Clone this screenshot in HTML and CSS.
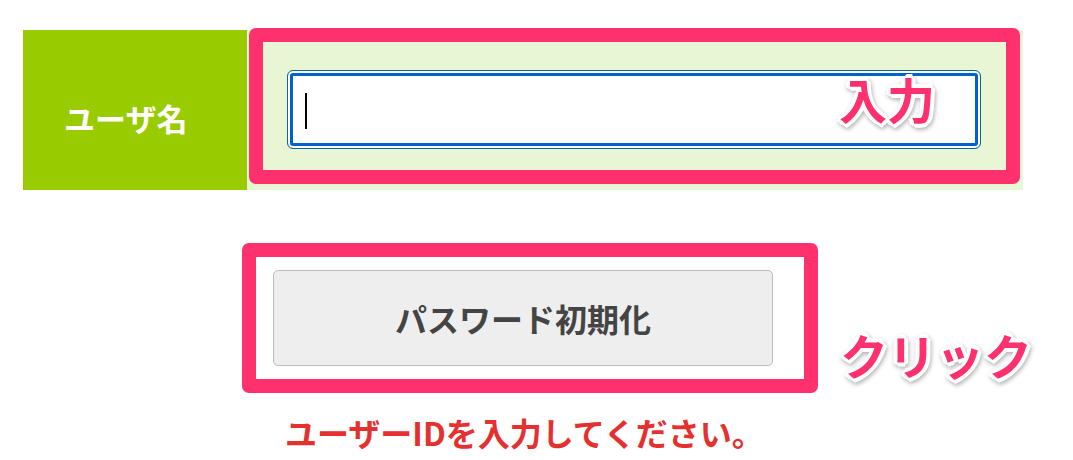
FILE: index.html
```html
<!DOCTYPE html>
<html lang="ja">
<head>
    <meta charset="UTF-8">
    <meta name="viewport" content="width=device-width, initial-scale=1.0">
    <title>パスワード初期化</title>
    <link rel="stylesheet" href="styles.css">
</head>
<body>
    <div class="form-row">
        <div class="label-cell">ユーザ名</div>
        <div class="field-cell">
            <div class="mark mark-input">
                <div class="input-box"><span class="caret"></span></div>
                <span class="note note-input">入力</span>
            </div>
        </div>
    </div>

    <div class="action-row">
        <div class="mark mark-button">
            <button type="button" class="reset-btn">パスワード初期化</button>
        </div>
        <span class="note note-click">クリック</span>
    </div>

    <p class="error">ユーザーIDを入力してください。</p>
</body>
</html>
```

FILE: styles.css
```css
body {
    margin: 0;
    padding-top: 30px;
    font-family: "Noto Sans CJK JP", "Noto Sans", sans-serif;
    background-color: #fff;
}

.form-row {
    display: flex;
    margin-left: 23px;
    width: 1000px;
}
.label-cell {
    width: 224px;
    height: 160px;
    box-sizing: border-box;
    padding: 14px 0 0 41px;
    display: flex;
    align-items: center;
    background-color: #99cc00;
    color: #fff;
    font-size: 31px;
    font-weight: bold;
}
.field-cell {
    flex: 1;
    background-color: #e8f6d5;
}

/* pink annotation frames */
.mark {
    border: 14px solid #ff306e;
    border-radius: 7px;
    position: relative;
}
.mark-input {
    margin: -2px 3px 6px 2px;
    padding: 28px 25px 21px 24px;
}
.input-box {
    height: 79px;
    box-sizing: border-box;
    border: 1px solid #0f6592;
    border-radius: 6px;
    box-shadow: inset 0 0 0 2px #fff, inset 0 0 0 5px #0063cc;
    background-color: #fff;
    padding: 22px 0 0 17px;
}
.caret {
    display: block;
    width: 2px;
    height: 36px;
    background-color: #000;
}

.note {
    color: #ff306e;
    font-size: 48px;
    font-weight: bold;
    line-height: 1;
    text-shadow:
        3px 0 0 #fff, -3px 0 0 #fff, 0 3px 0 #fff, 0 -3px 0 #fff,
        2px 2px 0 #fff, -2px 2px 0 #fff, 2px -2px 0 #fff, -2px -2px 0 #fff,
        4px 1px 0 #fff, -4px 1px 0 #fff, 1px 4px 0 #fff, 1px -4px 0 #fff;
    filter: drop-shadow(1px 2px 2px rgba(0, 0, 0, 0.3));
}
.note-input {
    position: absolute;
    top: 32px;
    left: 576px;
}

.action-row {
    display: flex;
    align-items: flex-end;
    margin: 53px 0 0 242px;
}
.mark-button {
    padding: 13px 31px 13px 17px;
}
.reset-btn {
    display: block;
    width: 500px;
    height: 96px;
    background-color: #eee;
    border: 1px solid #bbb;
    border-radius: 5px;
    color: #444;
    font-family: inherit;
    font-size: 32px;
    font-weight: bold;
}
.note-click {
    margin: 0 0 15px 22px;
}

.error {
    margin: 16px 0 0 285px;
    color: #e53030;
    font-size: 32px;
    font-weight: bold;
}
```
